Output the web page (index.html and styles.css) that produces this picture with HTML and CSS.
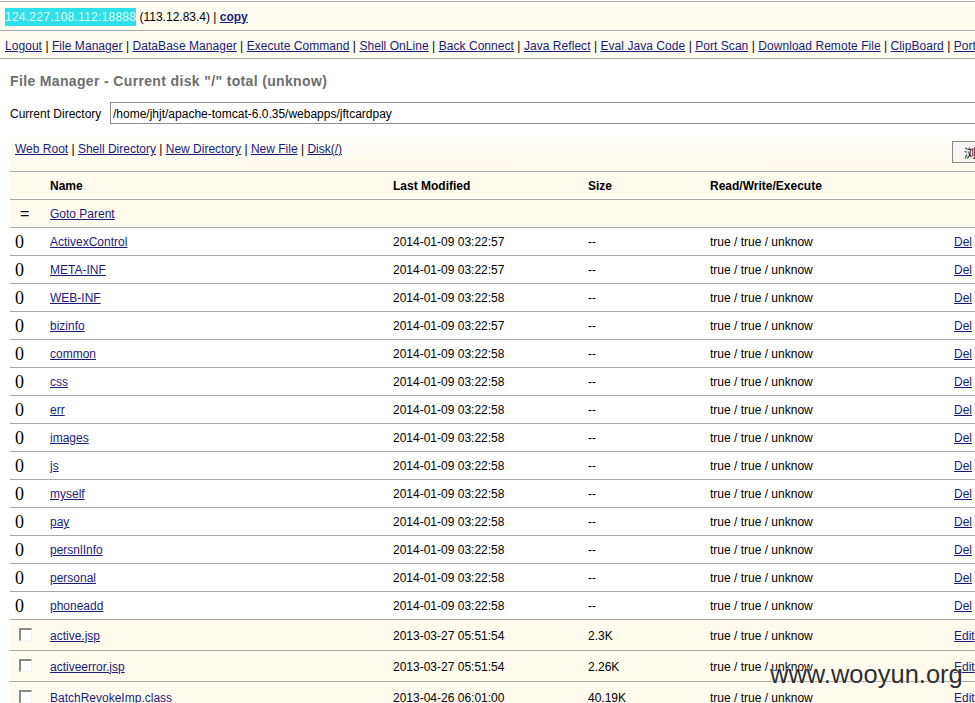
FILE: index.html
```html
<!DOCTYPE html>
<html>
<head>
<meta charset="utf-8">
<link rel="stylesheet" href="styles.css">
</head>
<body>
<div class="page">
  <div class="topbar">
    <span class="sel">124.227.108.112:18888</span> (113.12.83.4) | <a href="#" class="bold">copy</a>
  </div>
  <div class="nav">
    <a href="#">Logout</a> | <a href="#">File Manager</a> | <a href="#">DataBase Manager</a> | <a href="#">Execute Command</a> | <a href="#">Shell OnLine</a> | <a href="#">Back Connect</a> | <a href="#">Java Reflect</a> | <a href="#">Eval Java Code</a> | <a href="#">Port Scan</a> | <a href="#">Download Remote File</a> | <a href="#">ClipBoard</a> | <a href="#">Port Map</a>
  </div>
  <h2 class="title">File Manager - Current disk "/" total (unknow)</h2>
  <div class="dirrow">
    <span class="dirlabel">Current Directory</span>
    <input class="dirinput" type="text" value="/home/jhjt/apache-tomcat-6.0.35/webapps/jftcardpay">
  </div>
  <div class="toolbar">
    <div class="links"><a href="#">Web Root</a> | <a href="#">Shell Directory</a> | <a href="#">New Directory</a> | <a href="#">New File</a> | <a href="#">Disk(/)</a></div>
    <button class="btn">浏览</button>
  </div>
  <table class="files">
    <colgroup><col class="c-ico"><col class="c-name"><col class="c-mod"><col class="c-size"><col class="c-rwx"><col class="c-act"></colgroup>
    <tr class="head"><td></td><td class="hname">Name</td><td>Last Modified</td><td>Size</td><td>Read/Write/Execute</td><td></td></tr>
    <tr class="parent"><td class="eq">=</td><td><a href="#">Goto Parent</a></td><td></td><td></td><td></td><td></td></tr>
    <tr class="dir"><td class="ico">0</td><td><a href="#">ActivexControl</a></td><td>2014-01-09 03:22:57</td><td>--</td><td>true / true / unknow</td><td><a href="#">Del</a></td></tr>
    <tr class="dir"><td class="ico">0</td><td><a href="#">META-INF</a></td><td>2014-01-09 03:22:57</td><td>--</td><td>true / true / unknow</td><td><a href="#">Del</a></td></tr>
    <tr class="dir"><td class="ico">0</td><td><a href="#">WEB-INF</a></td><td>2014-01-09 03:22:58</td><td>--</td><td>true / true / unknow</td><td><a href="#">Del</a></td></tr>
    <tr class="dir"><td class="ico">0</td><td><a href="#">bizinfo</a></td><td>2014-01-09 03:22:57</td><td>--</td><td>true / true / unknow</td><td><a href="#">Del</a></td></tr>
    <tr class="dir"><td class="ico">0</td><td><a href="#">common</a></td><td>2014-01-09 03:22:58</td><td>--</td><td>true / true / unknow</td><td><a href="#">Del</a></td></tr>
    <tr class="dir"><td class="ico">0</td><td><a href="#">css</a></td><td>2014-01-09 03:22:58</td><td>--</td><td>true / true / unknow</td><td><a href="#">Del</a></td></tr>
    <tr class="dir"><td class="ico">0</td><td><a href="#">err</a></td><td>2014-01-09 03:22:58</td><td>--</td><td>true / true / unknow</td><td><a href="#">Del</a></td></tr>
    <tr class="dir"><td class="ico">0</td><td><a href="#">images</a></td><td>2014-01-09 03:22:58</td><td>--</td><td>true / true / unknow</td><td><a href="#">Del</a></td></tr>
    <tr class="dir"><td class="ico">0</td><td><a href="#">js</a></td><td>2014-01-09 03:22:58</td><td>--</td><td>true / true / unknow</td><td><a href="#">Del</a></td></tr>
    <tr class="dir"><td class="ico">0</td><td><a href="#">myself</a></td><td>2014-01-09 03:22:58</td><td>--</td><td>true / true / unknow</td><td><a href="#">Del</a></td></tr>
    <tr class="dir"><td class="ico">0</td><td><a href="#">pay</a></td><td>2014-01-09 03:22:58</td><td>--</td><td>true / true / unknow</td><td><a href="#">Del</a></td></tr>
    <tr class="dir"><td class="ico">0</td><td><a href="#">persnlInfo</a></td><td>2014-01-09 03:22:58</td><td>--</td><td>true / true / unknow</td><td><a href="#">Del</a></td></tr>
    <tr class="dir"><td class="ico">0</td><td><a href="#">personal</a></td><td>2014-01-09 03:22:58</td><td>--</td><td>true / true / unknow</td><td><a href="#">Del</a></td></tr>
    <tr class="dir"><td class="ico">0</td><td><a href="#">phoneadd</a></td><td>2014-01-09 03:22:58</td><td>--</td><td>true / true / unknow</td><td><a href="#">Del</a></td></tr>
    <tr class="file"><td class="chk"><span class="cb"></span></td><td><a href="#">active.jsp</a></td><td>2013-03-27 05:51:54</td><td>2.3K</td><td>true / true / unknow</td><td><a href="#">Edit</a></td></tr>
    <tr class="file"><td class="chk"><span class="cb"></span></td><td><a href="#">activeerror.jsp</a></td><td>2013-03-27 05:51:54</td><td>2.26K</td><td>true / true / unknow</td><td><a href="#">Edit</a></td></tr>
    <tr class="file"><td class="chk"><span class="cb"></span></td><td><a href="#">BatchRevokeImp.class</a></td><td>2013-04-26 06:01:00</td><td>40.19K</td><td>true / true / unknow</td><td><a href="#">Edit</a></td></tr>
  </table>
</div>
<div class="watermark">www.wooyun.org</div>
</body>
</html>
```
FILE: styles.css
```css
html, body {
  margin: 0;
  padding: 0;
  background: #fff;
  overflow: hidden;
}
body {
  font-family: "Liberation Sans", Arial, "Noto Sans CJK SC", sans-serif;
  font-size: 12px;
  color: #000;
  width: 975px;
  height: 703px;
  position: relative;
}
a {
  color: #1b1b7e;
  text-decoration: underline;
}
.page {
  width: 1040px;
}
.topbar {
  margin-top: 1px;
  height: 28px;
  line-height: 30px;
  border-top: 1px solid #a9a9a9;
  border-bottom: 1px solid #a9a9a9;
  background: #fffcf1;
  padding-left: 5px;
  white-space: nowrap;
  overflow: hidden;
}
.sel {
  background: #2fe0ea;
  color: #dfffff;
  padding: 2px 0;
  letter-spacing: 0.25px;
}
.bold {
  font-weight: bold;
}
.nav {
  height: 27px;
  line-height: 30px;
  border-bottom: 1px solid #a9a9a9;
  background: #fffcf1;
  padding-left: 5px;
  white-space: nowrap;
  overflow: hidden;
  letter-spacing: 0.05px;
}
.title {
  margin: 0;
  padding: 14px 0 0 10px;
  height: 29px;
  font-size: 14px;
  line-height: 16px;
  font-weight: bold;
  color: #6e6e6e;
  letter-spacing: 0.35px;
}
.dirrow {
  display: flex;
  align-items: center;
  padding-left: 10px;
  height: 22px;
}
.dirlabel {
  width: 100px;
  padding-top: 1px;
}
.dirinput {
  box-sizing: border-box;
  width: 930px;
  height: 22px;
  border: 1px solid #8d8d8d;
  margin: 0;
  padding: 1px 2px 0;
  font-family: "Liberation Sans", Arial, sans-serif;
  font-size: 12px;
  color: #000;
  background: #fff;
  outline: none;
}
.toolbar {
  margin-top: 11px;
  margin-left: 10px;
  height: 36px;
  background: linear-gradient(#fffefb, #fefaed);
  display: flex;
  align-items: flex-start;
  box-sizing: border-box;
}
.links {
  padding: 6px 0 0 5px;
  line-height: 16px;
  width: 937px;
}
.btn {
  margin-top: 6px;
  height: 22px;
  width: 60px;
  box-sizing: border-box;
  border: 1px solid #8a8a8a;
  background: #f6f5f2;
  font-family: "Noto Sans CJK SC", sans-serif;
  font-size: 12px;
  text-align: left;
  padding: 0 0 0 11px;
  color: #000;
}
.files {
  margin-left: 10px;
  border-collapse: collapse;
  table-layout: fixed;
  width: 1030px;
}
.c-ico { width: 40px; }
.c-name { width: 343px; }
.c-mod { width: 195px; }
.c-size { width: 122px; }
.c-rwx { width: 244px; }
.c-act { width: 86px; }
.files td {
  padding: 1px 0 0 0;
  border-top: 1px solid #a9a9a9;
  white-space: nowrap;
  overflow: hidden;
  vertical-align: middle;
}
.files td.hname {
  padding-left: 0;
}
.files tr.head td {
  height: 26px;
  background: #fffbee;
  font-weight: bold;
}
.files tr.parent td {
  height: 26px;
  background: #fffbee;
}
.files tr.dir td {
  height: 26px;
  background: #fff;
}
.files tr.file td {
  height: 29px;
  background: #fffbee;
}
.ico {
  font-family: "Liberation Serif", "Times New Roman", serif;
  font-size: 18px;
  padding-left: 5px !important;
}
.eq {
  font-size: 16px;
  padding-left: 10px !important;
}
.chk {
  padding-left: 9px !important;
}
.cb {
  display: inline-block;
  width: 10px;
  height: 10px;
  border-top: 2px solid #8a8a8a;
  border-left: 2px solid #8a8a8a;
  border-right: 1px solid #f3f3f3;
  border-bottom: 1px solid #f3f3f3;
  background: #fff;
  vertical-align: middle;
  margin-top: -3px;
}
.watermark {
  position: absolute;
  left: 770px;
  top: 660px;
  font-family: "Liberation Sans", Arial, sans-serif;
  font-size: 25.5px;
  color: #2f2f2f;
  text-shadow: 0 0 2px #fff, 0 0 2px #fff;
}
```
